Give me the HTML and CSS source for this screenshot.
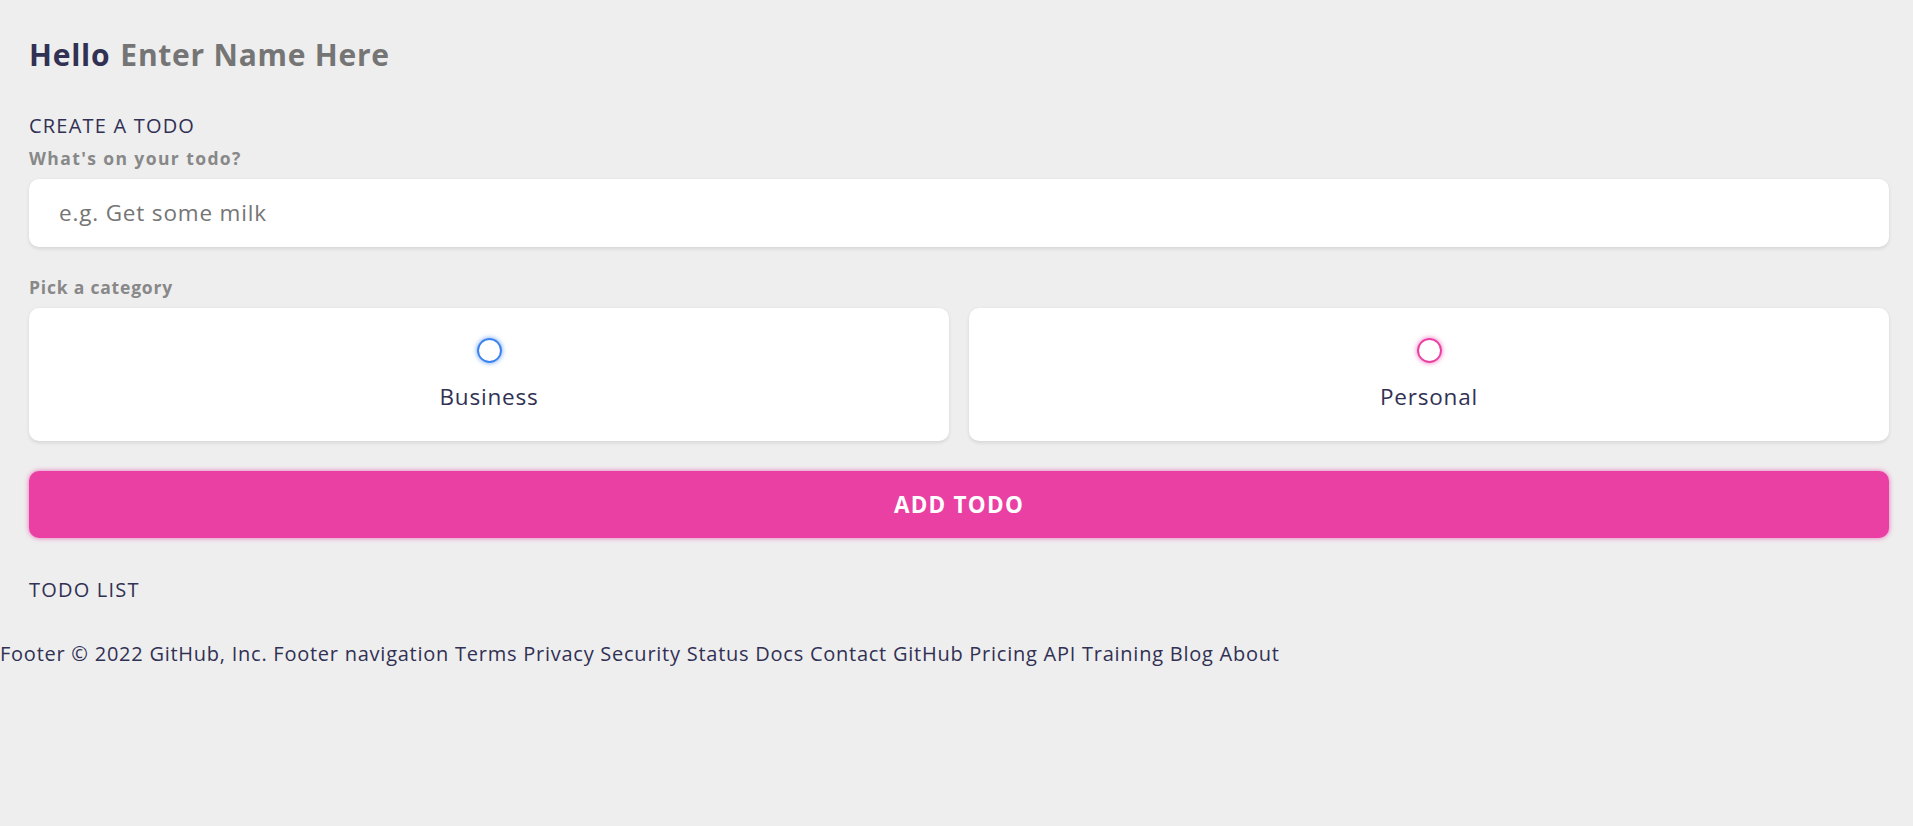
FILE: index.html
```html
<!DOCTYPE html>
<html lang="en">
<head>
<meta charset="utf-8">
<title>Todo</title>
<link rel="stylesheet" href="styles.css">
</head>
<body>
<main class="app">
  <section class="greeting">
    <h2 class="title">Hello <input class="name-input" type="text" placeholder="Enter Name Here"></h2>
  </section>

  <section class="create-todo">
    <h3 class="section-title">CREATE A TODO</h3>
    <form class="todo-form">
      <h4 class="field-label">What's on your todo?</h4>
      <input class="todo-input" type="text" placeholder="e.g. Get some milk">

      <h4 class="field-label">Pick a category</h4>
      <div class="options">
        <label class="option">
          <input class="radio" type="radio" name="category" value="business">
          <span class="bubble business"></span>
          <div class="option-text">Business</div>
        </label>
        <label class="option">
          <input class="radio" type="radio" name="category" value="personal">
          <span class="bubble personal"></span>
          <div class="option-text">Personal</div>
        </label>
      </div>

      <input class="submit" type="button" value="Add todo">
    </form>
  </section>

  <section class="todo-list">
    <h3 class="section-title">TODO LIST</h3>
    <div class="list"></div>
  </section>
</main>
<div class="footer">Footer © 2022 GitHub, Inc. Footer navigation Terms Privacy Security Status Docs Contact GitHub Pricing API Training Blog About</div>
</body>
</html>
```

FILE: styles.css
```css
* {
  margin: 0;
  padding: 0;
  box-sizing: border-box;
  font-family: "Open Sans", "Liberation Sans", sans-serif;
}

html {
  font-size: 20px;
}

body {
  background: #eeeeee;
  color: #313154;
  line-height: 1.22;
  letter-spacing: 0.04em;
}

.name-input,
.todo-input,
.submit {
  appearance: none;
  border: none;
  outline: none;
  background: none;
  line-height: 1.22;
}

section {
  margin-top: 40px;
  margin-bottom: 40px;
  padding-left: 29px;
  padding-right: 24px;
}

.greeting {
  margin-top: 37px;
}

.section-title {
  color: #313154;
  font-size: 1rem;
  font-weight: 400;
  letter-spacing: 0.06em;
  margin-bottom: 10px;
}

.field-label {
  color: #888888;
  font-size: 0.875rem;
  font-weight: 700;
  margin-bottom: 10px;
}

.field-label:first-child {
  letter-spacing: 0.08em;
}

.title {
  display: flex;
  color: #313154;
  font-size: 1.5rem;
  font-weight: 700;
  letter-spacing: 0.025em;
}

.name-input {
  margin-left: 10px;
  flex: 1 1 0%;
  min-width: 0;
  color: #313154;
  font-size: 1.5rem;
  font-weight: 700;
  letter-spacing: 0.025em;
}

.name-input::placeholder {
  color: #757575;
}

.todo-input {
  display: block;
  width: 100%;
  font-size: 1.125rem;
  letter-spacing: 0.037em;
  padding: 20px 30px;
  color: #313154;
  background-color: #ffffff;
  border-radius: 10px;
  box-shadow: 0 1.25px 3.75px rgba(0, 0, 0, 0.1);
  margin-bottom: 30px;
}

.todo-input::placeholder {
  color: #757575;
}

.options {
  display: grid;
  grid-template-columns: repeat(2, 1fr);
  gap: 20px;
  margin-bottom: 30px;
}

.option {
  display: flex;
  flex-direction: column;
  align-items: center;
  justify-content: center;
  background-color: #ffffff;
  padding: 30px;
  box-shadow: 0 1.25px 3.75px rgba(0, 0, 0, 0.1);
  border-radius: 10px;
  cursor: pointer;
}

.radio {
  display: none;
}

.bubble {
  display: block;
  width: 25px;
  height: 25px;
  border-radius: 999px;
  border: 2.5px solid #3a82ee;
  box-shadow: 0 0 5px rgba(58, 130, 238, 0.75);
}

.bubble.personal {
  border-color: #ea40a4;
  box-shadow: 0 0 5px rgba(234, 64, 164, 0.75);
}

.option-text {
  color: #313154;
  font-size: 1.125rem;
  letter-spacing: 0.035em;
  margin-top: 20px;
}

.submit {
  display: block;
  width: 100%;
  font-size: 1.125rem;
  letter-spacing: 0.055em;
  padding: 20px 30px;
  color: #ffffff;
  font-weight: 700;
  text-transform: uppercase;
  background-color: #ea40a4;
  box-shadow: 0 0 5px rgba(234, 64, 164, 0.75);
  border-radius: 10px;
  cursor: pointer;
}

.footer {
  font-size: 1rem;
  letter-spacing: 0.0375em;
  color: #313154;
}
```
